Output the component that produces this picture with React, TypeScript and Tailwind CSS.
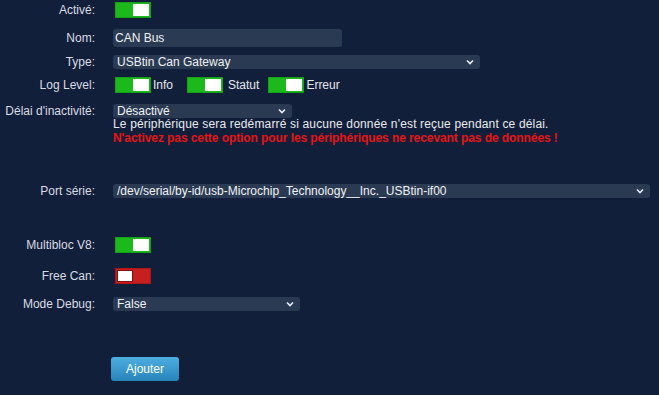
import React from "react";

const font = { fontFamily: '"Liberation Sans", Arial, sans-serif' };

function Toggle({ on }: { on: boolean }) {
  return (
    <div
      className={
        "ml-[2px] flex h-[16px] w-[36px] items-center border px-[1px] " +
        (on ? "justify-end border-[#15a015] bg-[#1cb91c]" : "justify-start border-[#a81818] bg-[#c71f1f]")
      }
    >
      <div
        className={
          "h-[12px] w-[16px] bg-white " + (on ? "" : "border border-[#8a1010]")
        }
      />
    </div>
  );
}

function Chevron() {
  return (
    <svg width="8" height="6" viewBox="0 0 8 6" className="shrink-0">
      <path d="M1 1.5 L4 4.5 L7 1.5" stroke="#e8edf5" strokeWidth="1.6" fill="none" />
    </svg>
  );
}

function Select({ value, w }: { value: string; w: string }) {
  return (
    <div
      className={
        "flex h-[14px] items-center justify-between rounded-[3px] bg-[#2a3a53] pl-[4px] pr-[6px] text-[12px] leading-[14px] text-[#f0f2f5] " +
        w
      }
    >
      <span>{value}</span>
      <Chevron />
    </div>
  );
}

function Label({ children }: { children: React.ReactNode }) {
  return (
    <div className="w-[95px] shrink-0 text-right text-[12px] leading-[14px] text-[#d9dce2]">
      {children}
    </div>
  );
}

export default function App() {
  return (
    <div style={font} className="h-[395px] w-[659px] overflow-hidden bg-[#121f3b]">
      <div className="flex flex-col">
        {/* Activé */}
        <div className="mt-[2px] flex h-[16px] items-center gap-[18px]">
          <Label>Activé:</Label>
          <Toggle on />
        </div>
        {/* Nom */}
        <div className="mt-[11px] flex h-[18px] items-center gap-[18px]">
          <Label>Nom:</Label>
          <div className="flex h-[18px] w-[229px] items-center rounded-[3px] bg-[#2a3a53] pl-[2px] text-[12px] text-[#f0f2f5]">
            CAN Bus
          </div>
        </div>
        {/* Type */}
        <div className="mt-[8px] flex h-[14px] items-center gap-[18px]">
          <Label>Type:</Label>
          <Select value="USBtin Can Gateway" w="w-[367px]" />
        </div>
        {/* Log Level */}
        <div className="mt-[8px] flex h-[16px] items-center gap-[18px]">
          <Label>Log Level:</Label>
          <div className="flex items-center text-[12px] leading-[14px] text-[#e6e8ec]">
            <Toggle on />
            <span className="ml-[2px] mr-[12px]">Info</span>
            <Toggle on />
            <span className="ml-[5px] mr-[7px]">Statut</span>
            <Toggle on />
            <span className="ml-[2px]">Erreur</span>
          </div>
        </div>
        {/* Délai */}
        <div className="mt-[11px] flex items-start gap-[18px]">
          <div className="pt-[0px]">
            <Label>Délai d'inactivité:</Label>
          </div>
          <div className="flex flex-col">
            <Select value="Désactivé" w="w-[179px] h-[13px]" />
            <div className="-mt-px text-[12px] leading-[14px] tracking-[0.16px] text-[#e8eaee]">
              Le périphérique sera redémarré si aucune donnée n'est reçue pendant ce délai.
            </div>
            <div className="text-[12px] font-bold leading-[14px] tracking-[-0.08px] text-[#e81414]">
              N'activez pas cette option pour les périphériques ne recevant pas de données !
            </div>
          </div>
        </div>
        {/* Port série */}
        <div className="mt-[39px] flex h-[14px] items-center gap-[18px]">
          <Label>Port série:</Label>
          <Select value="/dev/serial/by-id/usb-Microchip_Technology__Inc._USBtin-if00" w="w-[537px]" />
        </div>
        {/* Multibloc */}
        <div className="mt-[39px] flex h-[16px] items-center gap-[18px]">
          <Label>Multibloc V8:</Label>
          <Toggle on />
        </div>
        {/* Free Can */}
        <div className="mt-[15px] flex h-[16px] items-center gap-[18px]">
          <Label>Free Can:</Label>
          <Toggle on={false} />
        </div>
        {/* Mode Debug */}
        <div className="mt-[13px] flex h-[14px] items-center gap-[18px]">
          <Label>Mode Debug:</Label>
          <Select value="False" w="w-[187px]" />
        </div>
        {/* Button */}
        <div className="mt-[46px] flex">
          <button className="ml-[111px] flex h-[24px] w-[68px] items-center justify-center rounded-[3px] bg-gradient-to-b from-[#4eaee0] to-[#2784bb] text-[12px] text-white">
            Ajouter
          </button>
        </div>
      </div>
    </div>
  );
}
